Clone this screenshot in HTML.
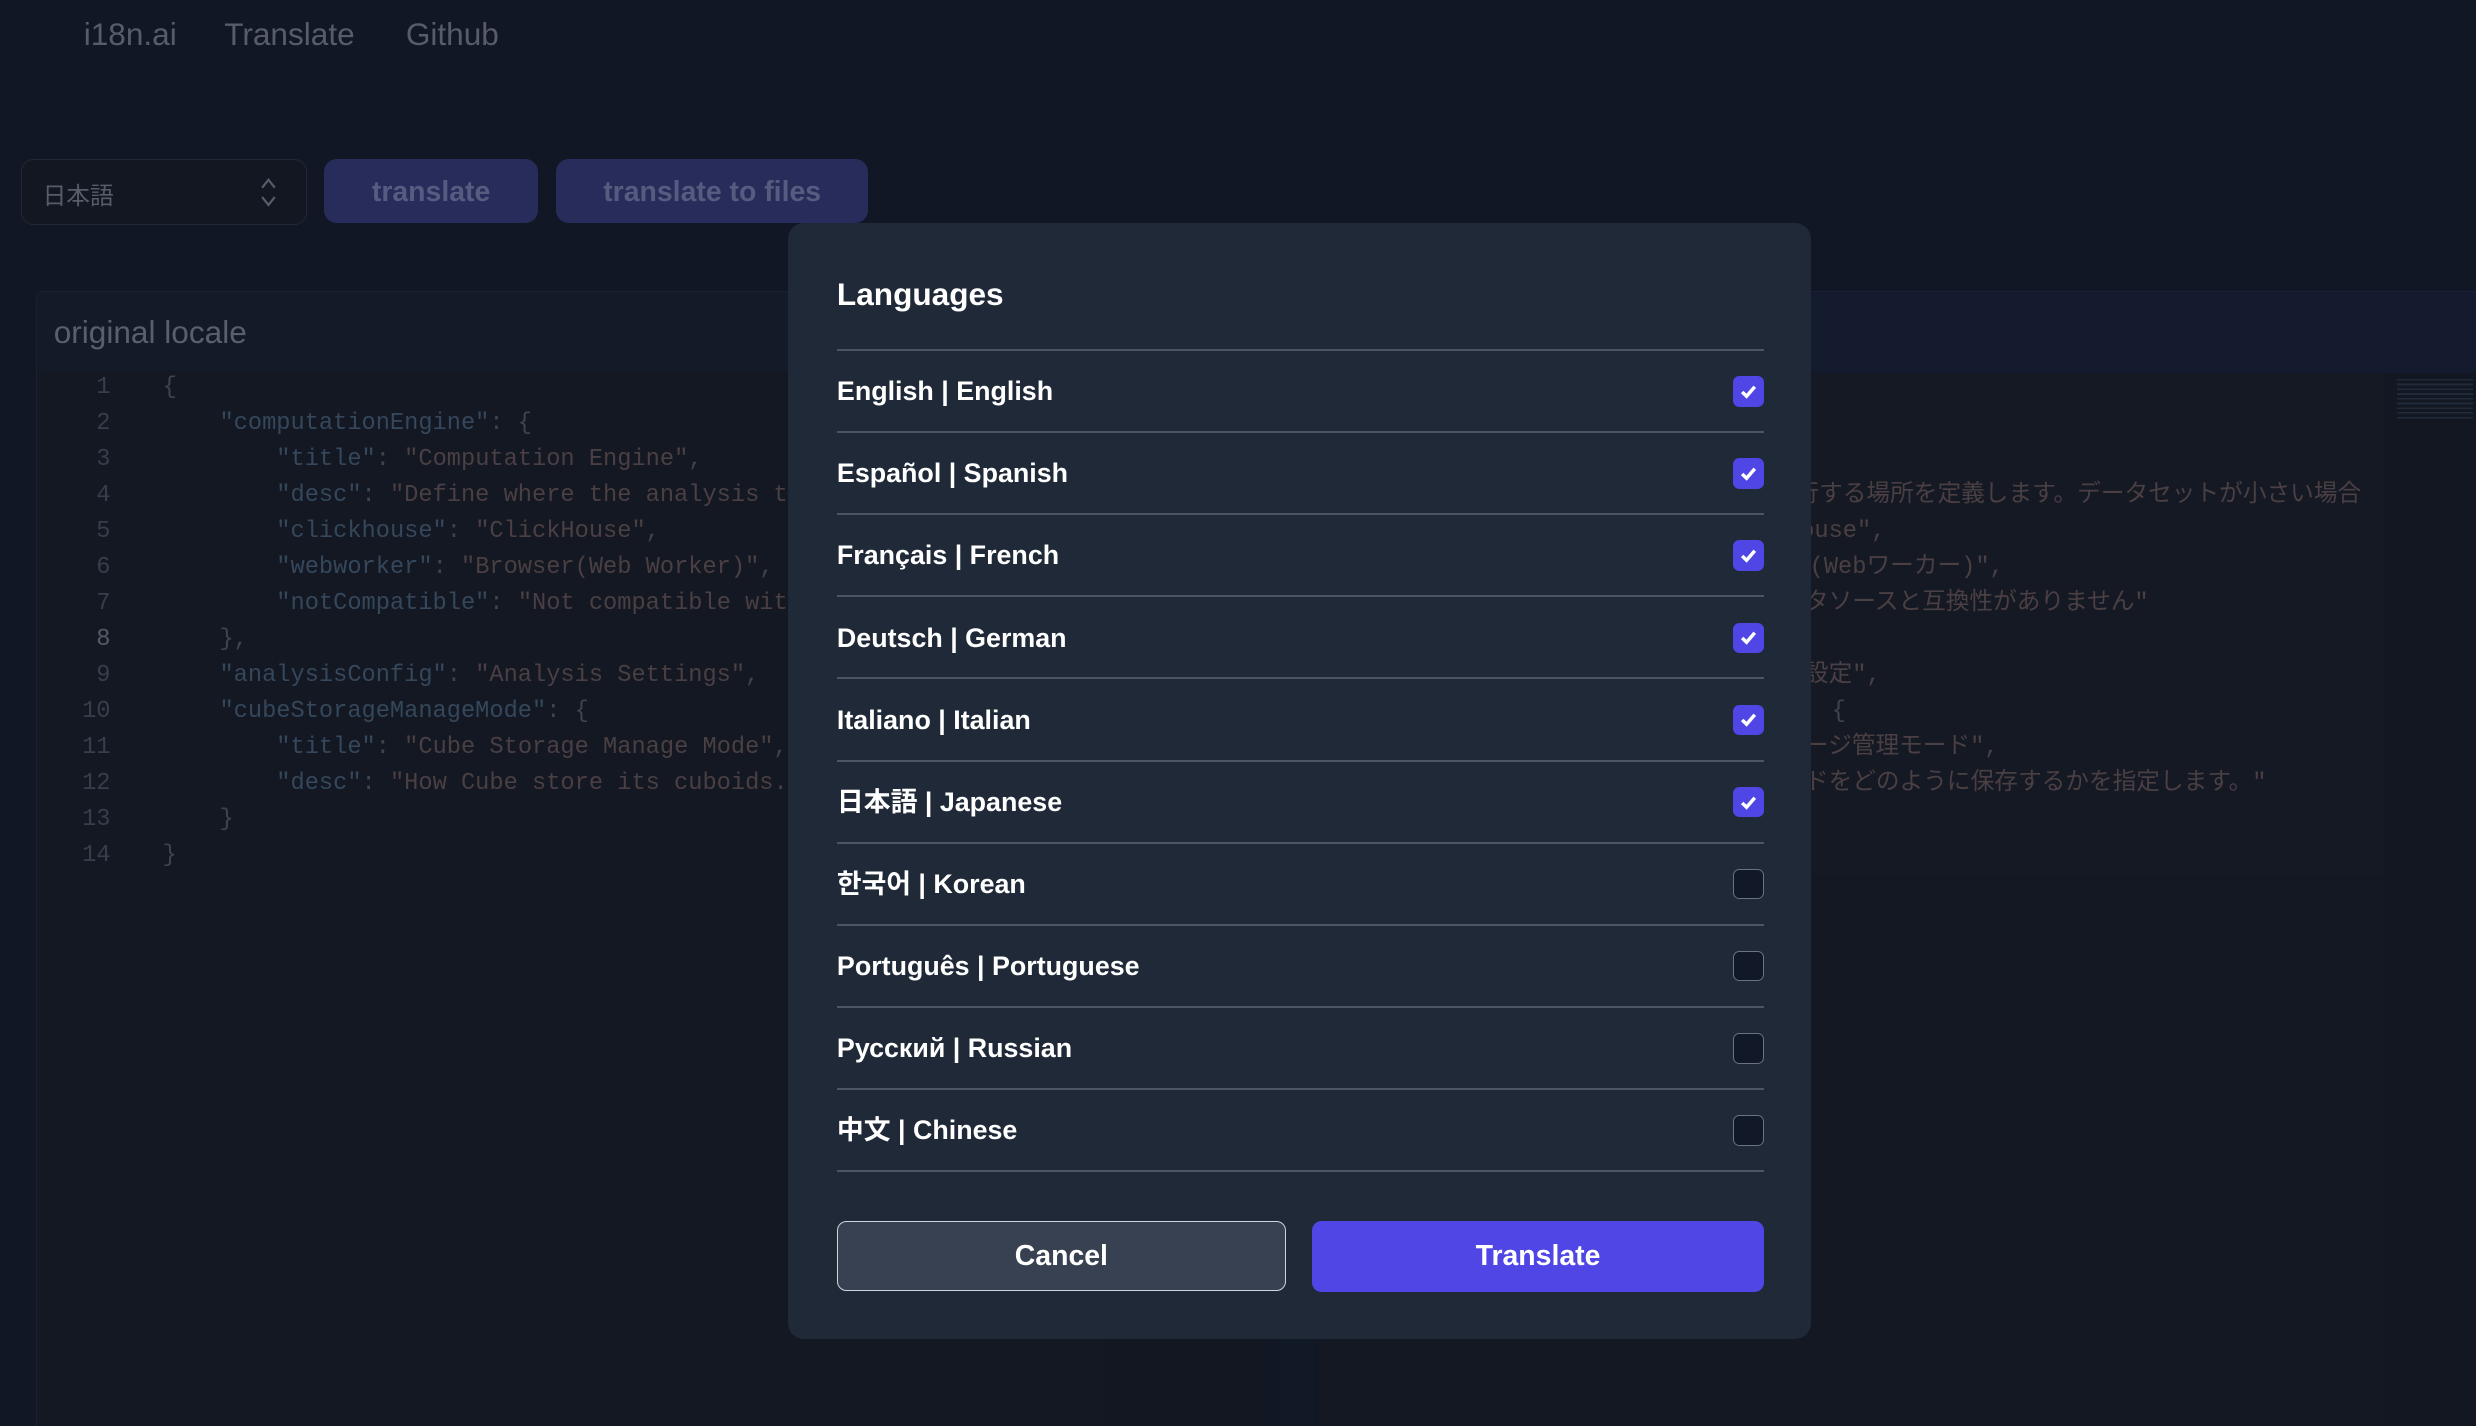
<!DOCTYPE html>
<html><head><meta charset="utf-8">
<style>
html,body{margin:0;padding:0;background:#121725;overflow:hidden}
body{width:2476px;height:1426px}
#w{position:relative;width:1568px;height:903px;zoom:1.5791;background:#121725;font-family:"Liberation Sans","Noto Sans CJK JP",sans-serif;overflow:hidden}
.a{position:absolute}
.nav{top:10px;font-size:20px;color:#575d68}
.mono{font-family:"Liberation Mono","Noto Sans CJK JP",monospace;font-size:15px;white-space:pre;line-height:18px}
.ln{position:absolute;left:30px;width:40px;text-align:right;color:#383e49}
.cl{position:absolute;left:103px;color:#3e444e}
.k{color:#34475b}.s{color:#4a3f43}
.row{position:absolute;left:530px;width:587px;height:52px;border-top:1.5px solid #4b5563;color:#fff;font-size:17px;font-weight:bold}
.row span{position:absolute;left:0;top:16px;line-height:20px;height:20px;white-space:nowrap}
.cb{position:absolute;right:0;top:16px;width:18px;height:18px;border-radius:4px;border:1px solid #6b7280;background:#111827}
.cb.on{background:#4f46e5;border-color:#4f46e5}
.cb.on svg{position:absolute;left:3px;top:3px}
.jp{position:absolute;color:#4a3f43}
</style></head><body><div id="w">
<div class="a nav" style="left:53px">i18n.ai</div>
<div class="a nav" style="left:142px">Translate</div>
<div class="a nav" style="left:257px">Github</div>

<div class="a" style="left:13px;top:101px;width:180px;height:40px;border:1px solid #222835;border-radius:8px;background:#131722"></div>
<div class="a" style="left:27px;top:112px;font-size:15px;color:#565c68">日本語</div>
<svg class="a" style="left:164px;top:111px" width="12" height="22" viewBox="0 0 12 22"><path d="M2 8 L6 3 L10 8 M2 14 L6 19 L10 14" fill="none" stroke="#565c68" stroke-width="1.4"/></svg>
<div class="a" style="left:205px;top:101px;width:136px;height:40px;border-radius:8px;background:#272c5a;color:#565b80;font-size:18px;font-weight:bold;text-align:center;line-height:42px">translate</div>
<div class="a" style="left:352px;top:101px;width:198px;height:40px;border-radius:8px;background:#272c5a;color:#565b80;font-size:18px;font-weight:bold;text-align:center;line-height:42px">translate to files</div>

<div class="a" style="left:23px;top:184px;width:700px;height:730px;border:1px solid #1a2030;border-radius:4px;background:#131a28"></div>
<div class="a" style="left:34px;top:199px;font-size:20px;color:#5a606b">original locale</div>
<div class="a" style="left:24px;top:235px;width:676px;height:670px;background:#141823"></div>
<div class="a" style="left:700px;top:235px;width:100px;height:670px;background:#131722"></div>
<div class="a" style="left:812px;top:184px;width:20px;height:720px;background:#111826"></div>
<div class="a mono" style="left:0;top:237px">
<div class="ln" style="top:0">1</div><div class="ln" style="top:22.8px">2</div><div class="ln" style="top:45.6px">3</div><div class="ln" style="top:68.4px">4</div><div class="ln" style="top:91.2px">5</div><div class="ln" style="top:114px">6</div><div class="ln" style="top:136.8px">7</div><div class="ln" style="top:159.6px;color:#555b66">8</div><div class="ln" style="top:182.4px">9</div><div class="ln" style="top:205.2px">10</div><div class="ln" style="top:228px">11</div><div class="ln" style="top:250.8px">12</div><div class="ln" style="top:273.6px">13</div><div class="ln" style="top:296.4px">14</div>
<div class="cl" style="top:0">{</div>
<div class="cl" style="top:22.8px">    <span class="k">"computationEngine"</span>: {</div>
<div class="cl" style="top:45.6px">        <span class="k">"title"</span>: <span class="s">"Computation Engine"</span>,</div>
<div class="cl" style="top:68.4px">        <span class="k">"desc"</span>: <span class="s">"Define where the analysis t</span></div>
<div class="cl" style="top:91.2px">        <span class="k">"clickhouse"</span>: <span class="s">"ClickHouse"</span>,</div>
<div class="cl" style="top:114px">        <span class="k">"webworker"</span>: <span class="s">"Browser(Web Worker)"</span>,</div>
<div class="cl" style="top:136.8px">        <span class="k">"notCompatible"</span>: <span class="s">"Not compatible wit</span></div>
<div class="cl" style="top:159.6px">    },</div>
<div class="cl" style="top:182.4px">    <span class="k">"analysisConfig"</span>: <span class="s">"Analysis Settings"</span>,</div>
<div class="cl" style="top:205.2px">    <span class="k">"cubeStorageManageMode"</span>: {</div>
<div class="cl" style="top:228px">        <span class="k">"title"</span>: <span class="s">"Cube Storage Manage Mode"</span>,</div>
<div class="cl" style="top:250.8px">        <span class="k">"desc"</span>: <span class="s">"How Cube store its cuboids.</span></div>
<div class="cl" style="top:273.6px">    }</div>
<div class="cl" style="top:296.4px">}</div>
</div>

<div class="a" style="left:835px;top:184px;width:740px;height:52px;background:#141b2e;border-top:1px solid #1b2233;border-bottom:1px solid #1b2233"></div>
<div class="a" style="left:835px;top:236px;width:675px;height:318px;background:#151924"></div>
<div class="a" style="left:835px;top:554px;width:675px;height:350px;background:#141822"></div>
<div class="a" style="left:1510px;top:236px;width:60px;height:670px;background:#131722"></div>
<div class="a" style="left:1518px;top:240px;width:48px;height:26px;background:repeating-linear-gradient(#1f2a3a 0 1px,transparent 1px 3px)"></div>
<div class="a mono" style="left:0;top:237px">
<div class="jp" style="left:1137px;top:68.4px">行する場所を定義します。データセットが小さい場合</div>
<div class="jp" style="left:1140px;top:91.2px">ouse",</div>
<div class="jp" style="left:1146px;top:114px">(Webワーカー)",</div>
<div class="jp" style="left:1143px;top:136.8px">タソースと互換性がありません"</div>
<div class="jp" style="left:1143px;top:182.4px">設定",</div>
<div class="jp" style="left:1160px;top:205.2px;color:#3e444e">{</div>
<div class="jp" style="left:1143px;top:228px">ージ管理モード",</div>
<div class="jp" style="left:1143px;top:250.8px">ドをどのように保存するかを指定します。"</div>
</div>

<div class="a" style="left:499px;top:141px;width:648px;height:707px;background:#1f2937;border-radius:10px"></div>
<div class="a" style="left:530px;top:175px;font-size:20px;font-weight:bold;color:#fff">Languages</div>
<div class="row" style="top:221px"><span>English | English</span><div class="cb on"><svg width="12" height="12" viewBox="0 0 12 12"><path d="M2 6.3 L4.8 9 L10 3" fill="none" stroke="#fff" stroke-width="2.2"/></svg></div></div>
<div class="row" style="top:273px"><span>Español | Spanish</span><div class="cb on"><svg width="12" height="12" viewBox="0 0 12 12"><path d="M2 6.3 L4.8 9 L10 3" fill="none" stroke="#fff" stroke-width="2.2"/></svg></div></div>
<div class="row" style="top:325px"><span>Français | French</span><div class="cb on"><svg width="12" height="12" viewBox="0 0 12 12"><path d="M2 6.3 L4.8 9 L10 3" fill="none" stroke="#fff" stroke-width="2.2"/></svg></div></div>
<div class="row" style="top:377px"><span>Deutsch | German</span><div class="cb on"><svg width="12" height="12" viewBox="0 0 12 12"><path d="M2 6.3 L4.8 9 L10 3" fill="none" stroke="#fff" stroke-width="2.2"/></svg></div></div>
<div class="row" style="top:429px"><span>Italiano | Italian</span><div class="cb on"><svg width="12" height="12" viewBox="0 0 12 12"><path d="M2 6.3 L4.8 9 L10 3" fill="none" stroke="#fff" stroke-width="2.2"/></svg></div></div>
<div class="row" style="top:481px"><span>日本語 | Japanese</span><div class="cb on"><svg width="12" height="12" viewBox="0 0 12 12"><path d="M2 6.3 L4.8 9 L10 3" fill="none" stroke="#fff" stroke-width="2.2"/></svg></div></div>
<div class="row" style="top:533px"><span>한국어 | Korean</span><div class="cb"></div></div>
<div class="row" style="top:585px"><span>Português | Portuguese</span><div class="cb"></div></div>
<div class="row" style="top:637px"><span>Русский | Russian</span><div class="cb"></div></div>
<div class="row" style="top:689px"><span>中文 | Chinese</span><div class="cb"></div></div>
<div class="a" style="left:530px;top:741px;width:587px;border-top:1.5px solid #4b5563"></div>
<div class="a" style="left:530px;top:773px;width:283px;height:43px;border:1px solid #d1d5db;border-radius:6px;background:#374151;color:#fff;font-size:18px;font-weight:bold;text-align:center;line-height:44px">Cancel</div>
<div class="a" style="left:831px;top:773px;width:286px;height:45px;border-radius:6px;background:#4f46e5;color:#fff;font-size:18px;font-weight:bold;text-align:center;line-height:45px">Translate</div>
</div></body></html>
